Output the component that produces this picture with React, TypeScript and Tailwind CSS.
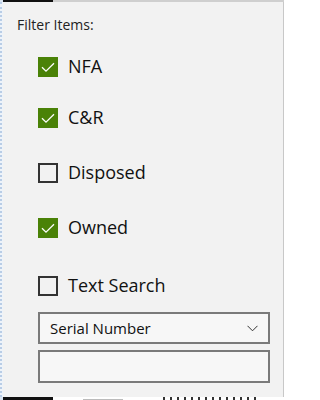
import React from "react";

type Item = { label: string; checked: boolean; mt: string };

const items: Item[] = [
  { label: "NFA", checked: true, mt: "mt-[22px]" },
  { label: "C&R", checked: true, mt: "mt-[31px]" },
  { label: "Disposed", checked: false, mt: "mt-[35px]" },
  { label: "Owned", checked: true, mt: "mt-[35px]" },
  { label: "Text Search", checked: false, mt: "mt-[38px]" },
];

export default function App() {
  return (
    <div className="w-[286px] h-[400px] bg-white flex flex-col overflow-hidden font-['Open_Sans','Noto_Sans',sans-serif] text-[#1a1a1a]">
      <TopEdge />
      <div className="flex h-[395px]">
        <div className="w-[3px] border-l-2 border-dotted border-[#b9cde6] bg-[#eef3f9]" />
        <FilterPanel />
        <div className="w-[2px] bg-white" />
      </div>
      <BottomEdge />
    </div>
  );
}

const TopEdge = () => {
  return (
    <div className="flex h-[2px]">
      <div className="w-[3px] bg-[#d9e4f1]" />
      <div className="w-[50px] bg-[#111]" />
      <div className="w-[231px] bg-[#cfcfcf]" />
      <div className="flex-1 bg-white" />
    </div>
  );
};

const BottomEdge = () => {
  return (
    <div className="flex h-[3px] items-end">
      <div className="w-[3px] h-full bg-[#d9e4f1]" />
      <div className="w-[50px] h-full bg-[#111]" />
      <div className="w-[30px] h-full bg-white" />
      <div className="w-[40px] h-[1px] bg-[#bbb]" />
      <div className="w-[40px] h-full bg-white" />
      <div className="flex gap-[5px] h-full">
        {[0, 1, 2, 3, 4, 5, 6, 7, 8, 9, 10, 11, 12, 13].map((i) => (
          <div key={i} className="w-[2px] h-full bg-[#333]" />
        ))}
      </div>
    </div>
  );
};

const FilterPanel = () => {
  return (
    <div className="flex-1 bg-[#f2f2f2] border-r border-[#c8c8c8] pt-[13px] pl-[14px]">
      <p className="text-[14px] leading-[20px] text-[#222]">Filter Items:</p>
      <div className="flex flex-col pl-[21px]">
        {items.map((item) => (
          <div key={item.label} className={`${item.mt} flex items-center gap-[10px] h-[20px]`}>
            <CheckBox checked={item.checked} />
            <span className="text-[18px] leading-[20px] mb-[3px] text-[#111] whitespace-nowrap">{item.label}</span>
          </div>
        ))}
        <div className="mt-[16px] w-[232px] h-[32px] border-2 border-[#7a7a7a] bg-[#f7f7f7] flex items-center justify-between pl-[10px] pr-[10px]">
          <span className="text-[15px] leading-[20px] text-[#111] mb-[1px]">Serial Number</span>
          <svg width="11" height="7" viewBox="0 0 11 7" fill="none">
            <path d="M0.5 0.8 L5.5 5.8 L10.5 0.8" stroke="#333" strokeWidth="1" />
          </svg>
        </div>
        <div className="mt-[6px] w-[232px] h-[33px] border-2 border-[#7a7a7a] bg-[#f7f7f7]" />
      </div>
    </div>
  );
};

const CheckBox = ({ checked }: { checked: boolean }) => {
  if (checked) {
    return (
      <span className="w-[20px] h-[20px] bg-[#4a8207] flex items-center justify-center shrink-0">
        <svg width="20" height="20" viewBox="0 0 20 20" fill="none">
          <path d="M4 10.2 L8 14.2 L16 6.2" stroke="#fff" strokeWidth="1.3" />
        </svg>
      </span>
    );
  }
  return <span className="w-[20px] h-[20px] border-2 border-[#333] bg-[#f2f2f2] shrink-0" />;
};
